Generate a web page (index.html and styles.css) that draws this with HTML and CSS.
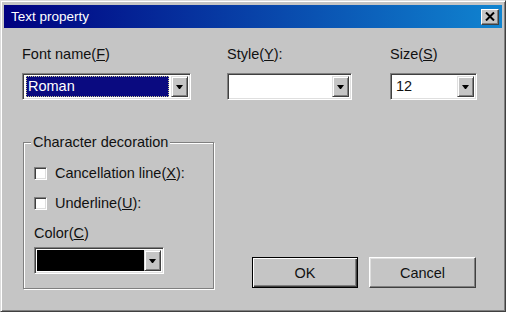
FILE: index.html
```html
<!DOCTYPE html>
<html lang="en">

<head>
    <meta charset="UTF-8">
    <meta name="viewport" content="width=device-width, initial-scale=1.0">
    <title>Text property</title>

    <link rel="stylesheet" href="styles.css">
</head>

<body>
    <div class="window">
        <div class="titlebar">
            <span class="title">Text property</span>
            <button class="close">
                <svg width="10" height="9" viewBox="0 0 10 9">
                    <path d="M1 0.5 L9 8.5 M9 0.5 L1 8.5" stroke="#000" stroke-width="2" />
                </svg>
            </button>
        </div>

        <div class="content">
            <div class="fields">
                <div class="field font-field">
                    <label>Font name(<u>F</u>)</label>
                    <div class="combo">
                        <div class="combo-text selected">Roman</div>
                        <div class="combo-button"><span class="arrow"></span></div>
                    </div>
                </div>

                <div class="field style-field">
                    <label>Style(<u>Y</u>):</label>
                    <div class="combo">
                        <div class="combo-text"></div>
                        <div class="combo-button"><span class="arrow"></span></div>
                    </div>
                </div>

                <div class="field size-field">
                    <label>Size(<u>S</u>)</label>
                    <div class="combo">
                        <div class="combo-text">12</div>
                        <div class="combo-button"><span class="arrow"></span></div>
                    </div>
                </div>
            </div>

            <div class="lower">
                <fieldset class="decoration">
                    <legend>Character decoration</legend>
                    <div class="check-row"><span class="checkbox"></span>Cancellation line(<u>X</u>):</div>
                    <div class="check-row second"><span class="checkbox"></span>Underline(<u>U</u>):</div>
                    <div class="color-label">Color(<u>C</u>)</div>
                    <div class="combo color-combo">
                        <div class="combo-text swatch"></div>
                        <div class="combo-button"><span class="arrow"></span></div>
                    </div>
                </fieldset>

                <div class="buttons">
                    <button class="btn default">OK</button>
                    <button class="btn cancel">Cancel</button>
                </div>
            </div>
        </div>
    </div>
</body>

</html>
```

FILE: styles.css
```css
body {
    margin: 0;
    background: #c5c5c5;
    font-family: "Liberation Sans", Arial, sans-serif;
    font-size: 14.5px;
    line-height: 17px;
    color: #111111;
}

.window {
    box-sizing: border-box;
    width: 506px;
    height: 312px;
    padding: 4px 3px 3px 3px;
    background: #c5c5c5;
    border: 1px solid;
    border-color: #dcdcdc #404040 #404040 #dcdcdc;
    box-shadow: inset 1px 1px #ffffff, inset -1px -1px #808080;
}

.titlebar {
    display: flex;
    align-items: center;
    justify-content: space-between;
    height: 23px;
    padding: 0 3px 0 7px;
    background: linear-gradient(to right, #000080, #1084d0);
    color: #ffffff;
    font-size: 13.5px;
}

button.close {
    display: flex;
    align-items: center;
    justify-content: center;
    box-sizing: border-box;
    width: 18px;
    height: 16px;
    padding: 0;
    background: #c5c5c5;
    border: 1px solid;
    border-color: #ffffff #404040 #404040 #ffffff;
    box-shadow: inset -1px -1px #808080;
}

.content {
    padding: 18px 25px 0 18px;
}

.fields {
    display: flex;
}

.field {
    display: flex;
    flex-direction: column;
    gap: 10px;
}

.font-field {
    width: 169px;
    margin-right: 36px;
}

.style-field {
    width: 125px;
    margin-right: 38px;
}

.size-field {
    width: 87px;
}

.combo {
    box-sizing: border-box;
    display: flex;
    height: 27px;
    padding: 2px;
    background: #ffffff;
    border: 1px solid;
    border-color: #808080 #ffffff #ffffff #808080;
    box-shadow: inset 1px 1px #404040, inset -1px -1px #dfdfdf;
}

.combo-text {
    flex: 1;
    display: flex;
    align-items: center;
    padding-left: 3px;
}

.combo-text.selected {
    margin-right: 2px;
    margin-left: 1px;
    padding-left: 2px;
    background: #0a0a80;
    color: #ffffff;
    outline: 1px dotted #c8c890;
    outline-offset: -1px;
}

.combo-button {
    box-sizing: border-box;
    display: flex;
    align-items: center;
    justify-content: center;
    width: 17px;
    background: #c5c5c5;
    border: 1px solid;
    border-color: #dfdfdf #404040 #404040 #dfdfdf;
    box-shadow: inset 1px 1px #ffffff, inset -1px -1px #808080;
}

.arrow {
    width: 1px;
    height: 0;
    border-left: 3px solid transparent;
    border-right: 3px solid transparent;
    border-top: 4px solid #000000;
}

.lower {
    display: flex;
    justify-content: space-between;
    align-items: flex-end;
    margin-top: 34px;
}

fieldset.decoration {
    box-sizing: border-box;
    width: 191px;
    margin: 0 0 0 1px;
    padding: 14px 10px 14px 10px;
    border: 1px solid #808080;
    box-shadow: inset 1px 1px #ffffff, 1px 1px #ffffff;
}

fieldset.decoration legend {
    margin-left: -3px;
    padding: 0 2px;
    background: #c5c5c5;
}

.check-row {
    display: flex;
    align-items: center;
}

.check-row.second {
    margin-top: 13px;
}

.checkbox {
    box-sizing: border-box;
    width: 13px;
    height: 13px;
    margin-right: 8px;
    background: #ffffff;
    border: 1px solid;
    border-color: #808080 #ffffff #ffffff #808080;
    box-shadow: inset 1px 1px #404040, inset -1px -1px #dfdfdf;
}

.color-label {
    margin-top: 13px;
}

.color-combo {
    width: 130px;
    margin-top: 5px;
}

.swatch {
    background: #000000;
}

.buttons {
    display: flex;
    gap: 11px;
    margin: 0 1px 1px 0;
}

.btn {
    box-sizing: border-box;
    width: 106px;
    height: 31px;
    padding: 0;
    background: #c5c5c5;
    font-family: "Liberation Sans", Arial, sans-serif;
    font-size: 14.5px;
    color: #111111;
    border: 1px solid;
    border-color: #ffffff #404040 #404040 #ffffff;
    box-shadow: inset -1px -1px #808080, inset 1px 1px #dfdfdf;
}

.btn.default {
    border-color: #000000;
    box-shadow: inset 1px 1px #ffffff, inset -1px -1px #404040, inset -2px -2px #808080;
}

.btn.cancel {
    width: 107px;
}
```
